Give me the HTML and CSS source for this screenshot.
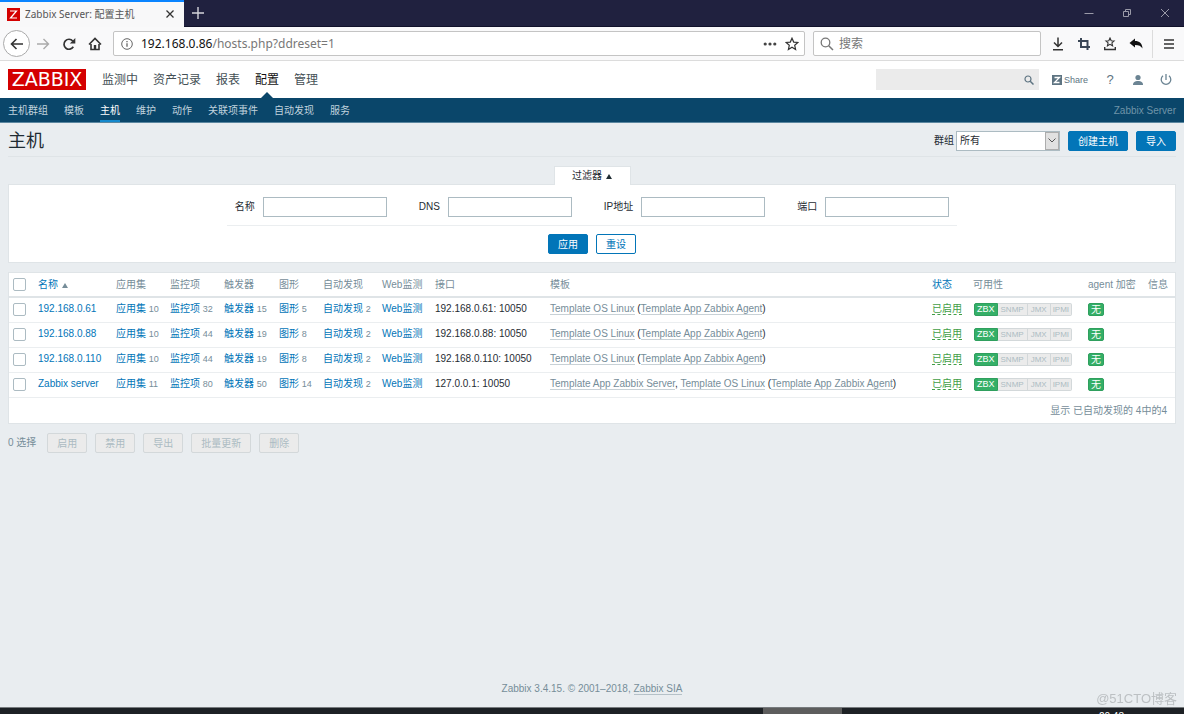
FILE: index.html
```html
<!DOCTYPE html>
<html lang="zh-CN">
<head>
<meta charset="utf-8">
<title>Zabbix Server: 配置主机</title>
<link rel="stylesheet" href="styles.css">
</head>
<body>
<div class="tabbar">
  <div class="tab">
    <svg class="favicon" viewBox="0 0 13 13"><rect width="13" height="13" fill="#d40000"/><path d="M3 3h6.500L3.500 10h6.500" fill="none" stroke="#fff" stroke-width="1.200"/></svg>
    <span class="tab-title">Zabbix Server: 配置主机</span>
    <button class="icon-btn" aria-label="关闭标签页"><svg width="10" height="10" viewBox="0 0 10 10"><path d="M1.500 1.500l7 7M8.500 1.500l-7 7" stroke="#333" stroke-width="1.300"/></svg></button>
  </div>
  <button class="icon-btn newtab" aria-label="新标签页"><svg width="12" height="12" viewBox="0 0 12 12"><path d="M6 0v12M0 6h12" stroke="#d5d5dc" stroke-width="1.400"/></svg></button>
  <div class="window-controls">
    <button class="icon-btn" aria-label="最小化"><svg width="10" height="10" viewBox="0 0 10 10"><path d="M0.500 5.500h9" stroke="#9a9aa8"/></svg></button>
    <button class="icon-btn" aria-label="还原"><svg width="10" height="10" viewBox="0 0 10 10"><path d="M1.500 3.500h5v5h-5zM3.500 3.500v-2h5v5h-2" fill="none" stroke="#9a9aa8"/></svg></button>
    <button class="icon-btn" aria-label="关闭"><svg width="10" height="10" viewBox="0 0 10 10"><path d="M1 1l8 8M9 1l-8 8" stroke="#9a9aa8"/></svg></button>
  </div>
</div>

<div class="toolbar">
  <button class="icon-btn back" aria-label="后退"><svg width="14" height="14" viewBox="0 0 14 14"><path d="M13 7H1.500M6.500 2l-5 5 5 5" fill="none" stroke="#333" stroke-width="1.600"/></svg></button>
  <button class="icon-btn tool" aria-label="前进"><svg width="14" height="14" viewBox="0 0 14 14"><path d="M1 7h11.500M7.500 2l5 5-5 5" fill="none" stroke="#aaa" stroke-width="1.400"/></svg></button>
  <button class="icon-btn tool" aria-label="刷新"><svg width="14" height="14" viewBox="0 0 14 14"><path d="M11.300 9.800A5 5 0 1 1 10.800 4" fill="none" stroke="#333" stroke-width="1.700"/><path d="M13.300 1v5.500H7.800z" fill="#333"/></svg></button>
  <button class="icon-btn tool" aria-label="主页"><svg width="14" height="14" viewBox="0 0 14 14"><path d="M1 7.500l6-6 6 6M3 7v5.500h8V7" fill="none" stroke="#333" stroke-width="1.600"/><path d="M5.800 8h2.400v4.500H5.800z" fill="#333"/></svg></button>
  <div class="urlbar">
    <svg width="12" height="12" viewBox="0 0 12 12"><circle cx="6" cy="6" r="5.300" fill="none" stroke="#666"/><path d="M6 5.200v3.600M6 3v1.300" stroke="#666" stroke-width="1.300"/></svg>
    <span class="url"><b>192.168.0.86</b>/hosts.php?ddreset=1</span>
    <button class="icon-btn" aria-label="页面操作"><svg width="14" height="14" viewBox="0 0 14 14"><g fill="#444"><circle cx="2.200" cy="7" r="1.600"/><circle cx="7" cy="7" r="1.600"/><circle cx="11.800" cy="7" r="1.600"/></g></svg></button>
    <button class="icon-btn" aria-label="收藏"><svg width="14" height="14" viewBox="0 0 14 14"><path d="M7 1.200l1.700 3.900 4.200.4-3.200 2.800.9 4.200L7 10.300l-3.600 2.200.9-4.200L1.100 5.500l4.200-.4z" fill="none" stroke="#333" stroke-width="1.200"/></svg></button>
  </div>
  <div class="searchbar">
    <svg width="14" height="14" viewBox="0 0 14 14"><circle cx="5.500" cy="5.500" r="4.300" fill="none" stroke="#777" stroke-width="1.300"/><path d="M8.700 8.700L13 13" stroke="#777" stroke-width="1.500"/></svg>
    <input type="text" placeholder="搜索" aria-label="搜索">
  </div>
  <div class="tools">
    <button class="icon-btn tool" aria-label="下载"><svg width="14" height="14" viewBox="0 0 14 14"><path d="M7 .5v9M3 5.500l4 4 4-4M2 12.700h10" fill="none" stroke="#333" stroke-width="1.500"/></svg></button>
    <button class="icon-btn tool" aria-label="截图"><svg width="14" height="14" viewBox="0 0 14 14"><path d="M4 1v9h9M1 4h9.500v9" fill="none" stroke="#3a4656" stroke-width="2"/></svg></button>
    <button class="icon-btn tool" aria-label="书签"><svg width="14" height="14" viewBox="0 0 14 14"><path d="M7 1l1.200 2.700 2.900.3-2.200 1.900.7 2.900L7 7.300 4.400 8.800l.7-2.900L2.900 4l2.900-.3z" fill="none" stroke="#333" stroke-width="1.100"/><path d="M1.700 10v2.500h10.600V10" fill="none" stroke="#333" stroke-width="1.400"/></svg></button>
    <button class="icon-btn tool" aria-label="撤销"><svg width="14" height="14" viewBox="0 0 14 14"><path d="M.5 6L6 1.500V4c4.500 0 7 2 7.500 7.500C12 9 10 8 6 8v2.500z" fill="#111"/></svg></button>
  </div>
  <button class="icon-btn menu" aria-label="菜单"><svg width="12" height="12" viewBox="0 0 12 12"><path d="M1 2h10M1 6h10M1 10h10" stroke="#333" stroke-width="1.400"/></svg></button>
</div>

<header class="header">
  <a class="logo" href="#">ZABBIX</a>
  <nav class="main-nav">
    <a href="#">监测中</a><a href="#">资产记录</a><a href="#">报表</a><a class="active" href="#">配置</a><a href="#">管理</a>
  </nav>
  <div class="header-right">
    <div class="site-search">
      <input type="text" aria-label="站内搜索">
      <button class="icon-btn" aria-label="查找"><svg width="10" height="10" viewBox="0 0 10 10"><circle cx="4" cy="4" r="3" fill="none" stroke="#5e7482" stroke-width="1.200"/><path d="M6.200 6.200L9.500 9.500" stroke="#5e7482" stroke-width="1.500"/></svg></button>
    </div>
    <a class="share" href="#"><svg width="10" height="10" viewBox="0 0 10 10"><rect width="10" height="10" fill="#5e7482"/><path d="M2.500 2.500h5l-5 5h5" fill="none" stroke="#fff" stroke-width="1.300"/></svg>Share</a>
    <a class="head-icon" href="#">?</a>
    <a class="head-icon" href="#" aria-label="用户"><svg width="12" height="12" viewBox="0 0 12 12"><circle cx="6" cy="3.500" r="2.600" fill="#6b8493"/><path d="M1 11c0-3 2-4 5-4s5 1 5 4z" fill="#6b8493"/></svg></a>
    <a class="head-icon" href="#" aria-label="退出"><svg width="12" height="12" viewBox="0 0 12 12"><path d="M3 1.800a4.800 4.800 0 1 0 6 0M6 0v6" fill="none" stroke="#6b8493" stroke-width="1.300"/></svg></a>
  </div>
</header>

<nav class="sub-nav">
  <a href="#">主机群组</a><a href="#">模板</a><a class="active" href="#">主机</a><a href="#">维护</a><a href="#">动作</a><a href="#">关联项事件</a><a href="#">自动发现</a><a href="#">服务</a>
  <span class="server-name">Zabbix Server</span>
</nav>

<main class="page">
  <div class="page-head">
    <h1>主机</h1>
    <label for="group">群组</label>
    <div class="select-wrap">
      <select id="group"><option>所有</option></select>
      <span class="select-arrow"><svg width="8" height="5" viewBox="0 0 8 5"><path d="M.5.5L4 4 7.500.5" fill="none" stroke="#555"/></svg></span>
    </div>
    <button class="btn">创建主机</button>
    <button class="btn">导入</button>
  </div>

  <form class="filter">
    <button type="button" class="filter-tab">过滤器 <i class="tri"></i></button>
    <div class="filter-panel">
      <div class="filter-fields">
        <div class="field"><label for="f-name">名称</label><input id="f-name" type="text"></div>
        <div class="field"><label for="f-dns">DNS</label><input id="f-dns" type="text"></div>
        <div class="field"><label for="f-ip">IP地址</label><input id="f-ip" type="text"></div>
        <div class="field"><label for="f-port">端口</label><input id="f-port" type="text"></div>
      </div>
      <div class="filter-actions">
        <button type="button" class="btn">应用</button>
        <button type="button" class="btn btn-alt">重设</button>
      </div>
    </div>
  </form>

  <table class="hosts">
    <colgroup><col class="c-check"><col class="c-name"><col class="c-mid"><col class="c-mid"><col class="c-trig"><col class="c-graph"><col class="c-disc"><col class="c-web"><col class="c-iface"><col><col class="c-status"><col class="c-avail"><col class="c-agent"><col class="c-info"></colgroup>
    <thead>
      <tr><th><input type="checkbox" aria-label="全选"></th><th><a href="#">名称 <i class="tri"></i></a></th><th>应用集</th><th>监控项</th><th>触发器</th><th>图形</th><th>自动发现</th><th>Web监测</th><th>接口</th><th>模板</th><th><a href="#">状态</a></th><th>可用性</th><th>agent 加密</th><th>信息</th></tr>
    </thead>
    <tbody>
      <tr><td><input type="checkbox" aria-label="192.168.0.61"></td><td><a href="#">192.168.0.61</a></td><td><a href="#">应用集</a> <sub>10</sub></td><td><a href="#">监控项</a> <sub>32</sub></td><td><a href="#">触发器</a> <sub>15</sub></td><td><a href="#">图形</a> <sub>5</sub></td><td><a href="#">自动发现</a> <sub>2</sub></td><td><a href="#">Web监测</a></td><td>192.168.0.61: 10050</td><td><a class="tpl" href="#">Template OS Linux</a> (<a class="tpl" href="#">Template App Zabbix Agent</a>)</td><td><a class="on" href="#">已启用</a></td><td><span class="avail"><b>ZBX</b><span>SNMP</span><span>JMX</span><span>IPMI</span></span></td><td><span class="none">无</span></td><td></td></tr>
      <tr><td><input type="checkbox" aria-label="192.168.0.88"></td><td><a href="#">192.168.0.88</a></td><td><a href="#">应用集</a> <sub>10</sub></td><td><a href="#">监控项</a> <sub>44</sub></td><td><a href="#">触发器</a> <sub>19</sub></td><td><a href="#">图形</a> <sub>8</sub></td><td><a href="#">自动发现</a> <sub>2</sub></td><td><a href="#">Web监测</a></td><td>192.168.0.88: 10050</td><td><a class="tpl" href="#">Template OS Linux</a> (<a class="tpl" href="#">Template App Zabbix Agent</a>)</td><td><a class="on" href="#">已启用</a></td><td><span class="avail"><b>ZBX</b><span>SNMP</span><span>JMX</span><span>IPMI</span></span></td><td><span class="none">无</span></td><td></td></tr>
      <tr><td><input type="checkbox" aria-label="192.168.0.110"></td><td><a href="#">192.168.0.110</a></td><td><a href="#">应用集</a> <sub>10</sub></td><td><a href="#">监控项</a> <sub>44</sub></td><td><a href="#">触发器</a> <sub>19</sub></td><td><a href="#">图形</a> <sub>8</sub></td><td><a href="#">自动发现</a> <sub>2</sub></td><td><a href="#">Web监测</a></td><td>192.168.0.110: 10050</td><td><a class="tpl" href="#">Template OS Linux</a> (<a class="tpl" href="#">Template App Zabbix Agent</a>)</td><td><a class="on" href="#">已启用</a></td><td><span class="avail"><b>ZBX</b><span>SNMP</span><span>JMX</span><span>IPMI</span></span></td><td><span class="none">无</span></td><td></td></tr>
      <tr><td><input type="checkbox" aria-label="Zabbix server"></td><td><a href="#">Zabbix server</a></td><td><a href="#">应用集</a> <sub>11</sub></td><td><a href="#">监控项</a> <sub>80</sub></td><td><a href="#">触发器</a> <sub>50</sub></td><td><a href="#">图形</a> <sub>14</sub></td><td><a href="#">自动发现</a> <sub>2</sub></td><td><a href="#">Web监测</a></td><td>127.0.0.1: 10050</td><td><a class="tpl" href="#">Template App Zabbix Server</a>, <a class="tpl" href="#">Template OS Linux</a> (<a class="tpl" href="#">Template App Zabbix Agent</a>)</td><td><a class="on" href="#">已启用</a></td><td><span class="avail"><b>ZBX</b><span>SNMP</span><span>JMX</span><span>IPMI</span></span></td><td><span class="none">无</span></td><td></td></tr>
    </tbody>
    <tfoot><tr><td colspan="14">显示 已自动发现的 4中的4</td></tr></tfoot>
  </table>

  <div class="bulk">
    <span>0 选择</span>
    <button class="btn" disabled>启用</button>
    <button class="btn" disabled>禁用</button>
    <button class="btn" disabled>导出</button>
    <button class="btn" disabled>批量更新</button>
    <button class="btn" disabled>删除</button>
  </div>
</main>

<footer class="footer">Zabbix 3.4.15. © 2001–2018, <a href="#">Zabbix SIA</a></footer>
<div class="taskbar"><span class="task"></span><span class="clock">20:48</span></div>
<div class="watermark">@51CTO博客</div>
</body>
</html>
```
FILE: styles.css
```css
* { box-sizing: border-box; }

body {
  margin: 0;
  min-height: 100vh;
  display: flex;
  flex-direction: column;
  background: #e9edf0;
  color: #1f2c33;
  font: 10px/14px "Liberation Sans", "Noto Sans CJK SC", sans-serif;
}

a { color: #0275b8; text-decoration: none; }
input, select, button { font: inherit; color: inherit; }
svg { display: block; flex: none; }

.icon-btn {
  display: flex;
  align-items: center;
  justify-content: center;
  padding: 0;
  border: 0;
  background: none;
}

/* Browser tab strip */
.tabbar {
  display: flex;
  align-items: center;
  height: 27px;
  background: #20213f;
  border-bottom: 1px solid #10112a;
  font-family: "Noto Sans", "Noto Sans CJK SC", sans-serif;
}
.tab {
  display: flex;
  align-items: center;
  gap: 5px;
  width: 184px;
  height: 27px;
  padding: 0 9px 0 7px;
  background: #f8f8f9;
  border-top: 2px solid #0a84ff;
  color: #555;
}
.favicon { width: 13px; height: 13px; }
.tab-title { flex: 1; white-space: nowrap; }
.newtab { width: 28px; height: 26px; }
.window-controls { display: flex; gap: 28px; margin-left: auto; padding-right: 14px; }

/* Browser toolbar */
.toolbar {
  display: flex;
  align-items: center;
  height: 34px;
  padding-left: 3px;
  background: #f9f9fa;
  border-bottom: 1px solid #dcdcdc;
  font: 12px/16px "Noto Sans", "Noto Sans CJK SC", sans-serif;
}
.tool { width: 26px; height: 26px; }
.back { width: 27px; height: 27px; border: 1px solid #aaa; border-radius: 50%; background: #fff; }
.urlbar, .searchbar {
  display: flex;
  align-items: center;
  gap: 8px;
  height: 25px;
  border: 1px solid #c4c4c4;
  border-radius: 2px;
  background: #fff;
}
.urlbar { flex: 1; margin: 0 8px 0 5px; padding: 0 5px 0 7px; }
.url { flex: 1; color: #777; }
.url b { font-weight: normal; color: #111; }
.searchbar { width: 228px; gap: 5px; padding: 0 6px; }
.searchbar input { flex: 1; min-width: 0; padding: 0; border: 0; outline: 0; background: none; }
.searchbar input::placeholder { color: #777; }
.tools { display: flex; padding: 0 3px 0 4px; }
.menu { width: 32px; height: 28px; border-left: 1px solid #dcdcdc; }

/* Site header */
.header {
  display: flex;
  align-items: center;
  height: 37px;
  padding: 0 12px 0 8px;
  background: #fff;
}
.logo {
  width: 78px;
  height: 21px;
  background: #d40000;
  color: #fff;
  font-family: "DejaVu Sans", sans-serif;
  font-size: 19px;
  line-height: 21px;
  text-align: center;
}
.main-nav { display: flex; gap: 15px; margin-left: 16px; align-self: stretch; font-size: 12px; line-height: 38px; }
.main-nav a { position: relative; color: #444f55; }
.main-nav .active { color: #111; }
.main-nav .active::after {
  content: "";
  position: absolute;
  left: 50%;
  bottom: 0;
  margin-left: -6px;
  border: 6px solid transparent;
  border-top: 0;
  border-bottom-color: #0a466a;
}
.header-right { display: flex; align-items: center; margin-left: auto; }
.site-search { display: flex; width: 163px; height: 21px; padding-right: 5px; background: #ebebeb; }
.site-search input { flex: 1; min-width: 0; border: 0; background: none; }
.share { display: flex; align-items: center; gap: 2px; margin: 0 8px 0 13px; color: #5e7482; font-size: 9px; }
.head-icon { display: flex; justify-content: center; width: 28px; color: #5e7482; font-size: 13px; }
.head-icon:last-child { margin-right: -8px; }

.sub-nav {
  display: flex;
  gap: 16px;
  height: 25px;
  padding: 0 8px;
  background: #0a466a;
  border-bottom: 1px solid #5b87a0;
  line-height: 25px;
}
.sub-nav a { color: #c0d3de; }
.sub-nav .active { color: #fff; border-bottom: 2px solid #1488cc; }
.server-name { margin-left: auto; color: #6f94a8; }

/* Page content */
.page { flex: 1; padding: 0 8px; }
.page-head {
  display: flex;
  align-items: center;
  height: 34px;
  padding-top: 2px;
  border-bottom: 1px solid #dfe4e7;
}
.page-head h1 { flex: 1; margin: 0; font-size: 18px; font-weight: normal; line-height: 24px; }
.select-wrap { position: relative; width: 104px; margin-left: 2px; }
.select-wrap select {
  display: block;
  appearance: none;
  width: 100%;
  height: 20px;
  padding: 0 18px 0 3px;
  border: 1px solid #acbbc2;
  border-radius: 0;
  background: #fff;
}
.select-arrow {
  position: absolute;
  top: 1px;
  right: 1px;
  display: flex;
  align-items: center;
  justify-content: center;
  width: 14px;
  height: 18px;
  border: 1px solid #adadad;
  background: #e1e1e1;
  pointer-events: none;
}
.btn {
  height: 20px;
  padding: 1px 9px 0;
  border: 1px solid #0275b8;
  border-radius: 2px;
  background: #0275b8;
  color: #fff;
  line-height: 17px;
}
.page-head .btn { margin-left: 8px; }
.btn-alt { background: #fff; color: #0275b8; }
.btn:disabled { border-color: #d3d8da; background: #ebebeb; color: #acbbc2; }

.tri {
  display: inline-block;
  margin-left: 1px;
  border: 3px solid transparent;
  border-top: 0;
  border-bottom: 5px solid currentColor;
}

.filter { display: flex; flex-direction: column; align-items: center; margin-top: 9px; }
.filter-tab {
  position: relative;
  z-index: 1;
  width: 77px;
  height: 19px;
  margin-bottom: -1px;
  border: 1px solid #dfe4e7;
  border-bottom: 0;
  background: #fff;
}
.filter-panel {
  display: flex;
  flex-direction: column;
  align-items: center;
  gap: 8px;
  width: 100%;
  padding: 12px 0 8px;
  border: 1px solid #dfe4e7;
  background: #fff;
}
.filter-fields { display: flex; gap: 32px; padding: 0 8px 8px; border-bottom: 1px solid #ebeef0; }
.field { display: flex; align-items: center; gap: 8px; }
.field input { width: 124px; height: 20px; border: 1px solid #acbbc2; background: #fff; }
.filter-actions { display: flex; gap: 8px; }

.hosts {
  width: 100%;
  margin-top: 9px;
  table-layout: fixed;
  border-collapse: separate;
  border-spacing: 0;
  border: 1px solid #dfe4e7;
  background: #fff;
}
.c-check { width: 25px; }
.c-name { width: 78px; }
.c-mid { width: 54px; }
.c-trig { width: 55px; }
.c-graph { width: 44px; }
.c-disc { width: 59px; }
.c-web { width: 53px; }
.c-iface { width: 115px; }
.c-status { width: 41px; }
.c-avail { width: 115px; }
.c-agent { width: 60px; }
.c-info { width: 31px; }
.hosts th, .hosts td {
  height: 25px;
  padding: 0 4px;
  border-bottom: 1px solid #ebeef0;
  text-align: left;
  white-space: nowrap;
}
.hosts tbody td { padding-bottom: 2px; }
.hosts th { border-bottom: 2px solid #dfe4e7; color: #768d99; font-weight: normal; }
.hosts th .tri { color: #768d99; }
.hosts sub { color: #768d99; font-size: 9px; line-height: 12px; vertical-align: baseline; }
.hosts input {
  display: block;
  appearance: none;
  width: 13px;
  height: 13px;
  margin: 0;
  border: 1px solid #acbbc2;
  border-radius: 2px;
  background: #fff;
}
.hosts .tpl { color: #768d99; border-bottom: 1px solid #c8d1d6; }
.hosts .on { color: #429e47; border-bottom: 1px dashed #429e47; }
.avail { display: flex; width: max-content; margin-left: 1px; font-size: 8px; line-height: 11px; }
.avail b { padding: 0 2px; border: 1px solid #2f9f5e; border-radius: 2px 0 0 2px; background: #34af67; color: #fff; font-size: 9px; font-weight: normal; }
.avail span { padding: 0 3px; border: 1px solid #d3d8da; border-left: 0; background: #ebebeb; color: #acbbc2; }
.avail span:last-child { padding: 0 2px; border-radius: 0 2px 2px 0; }
.none { display: block; width: 16px; border: 1px solid #2f9f5e; border-radius: 2px; background: #34af67; color: #fff; line-height: 11px; text-align: center; }
.hosts tfoot td { border-bottom: 0; padding-right: 8px; color: #768d99; text-align: right; }

.bulk { display: flex; align-items: center; gap: 8px; margin-top: 9px; color: #768d99; }
.bulk span { margin-right: 3px; }

.footer { padding-bottom: 11px; color: #768d99; text-align: center; }
.footer a { color: inherit; border-bottom: 1px solid #b5c1c8; }

.taskbar {
  display: flex;
  height: 7px;
  overflow: hidden;
  border-top: 1px solid #777b7e;
  background: #1d2125;
}
.task { width: 79px; margin-left: 763px; background: #5d5d5d; }
.clock { margin: 2px 60px 0 auto; color: #fff; }
.watermark { position: fixed; right: 7px; bottom: 6px; color: #bcc0c3; font-size: 13px; line-height: 18px; }
```
